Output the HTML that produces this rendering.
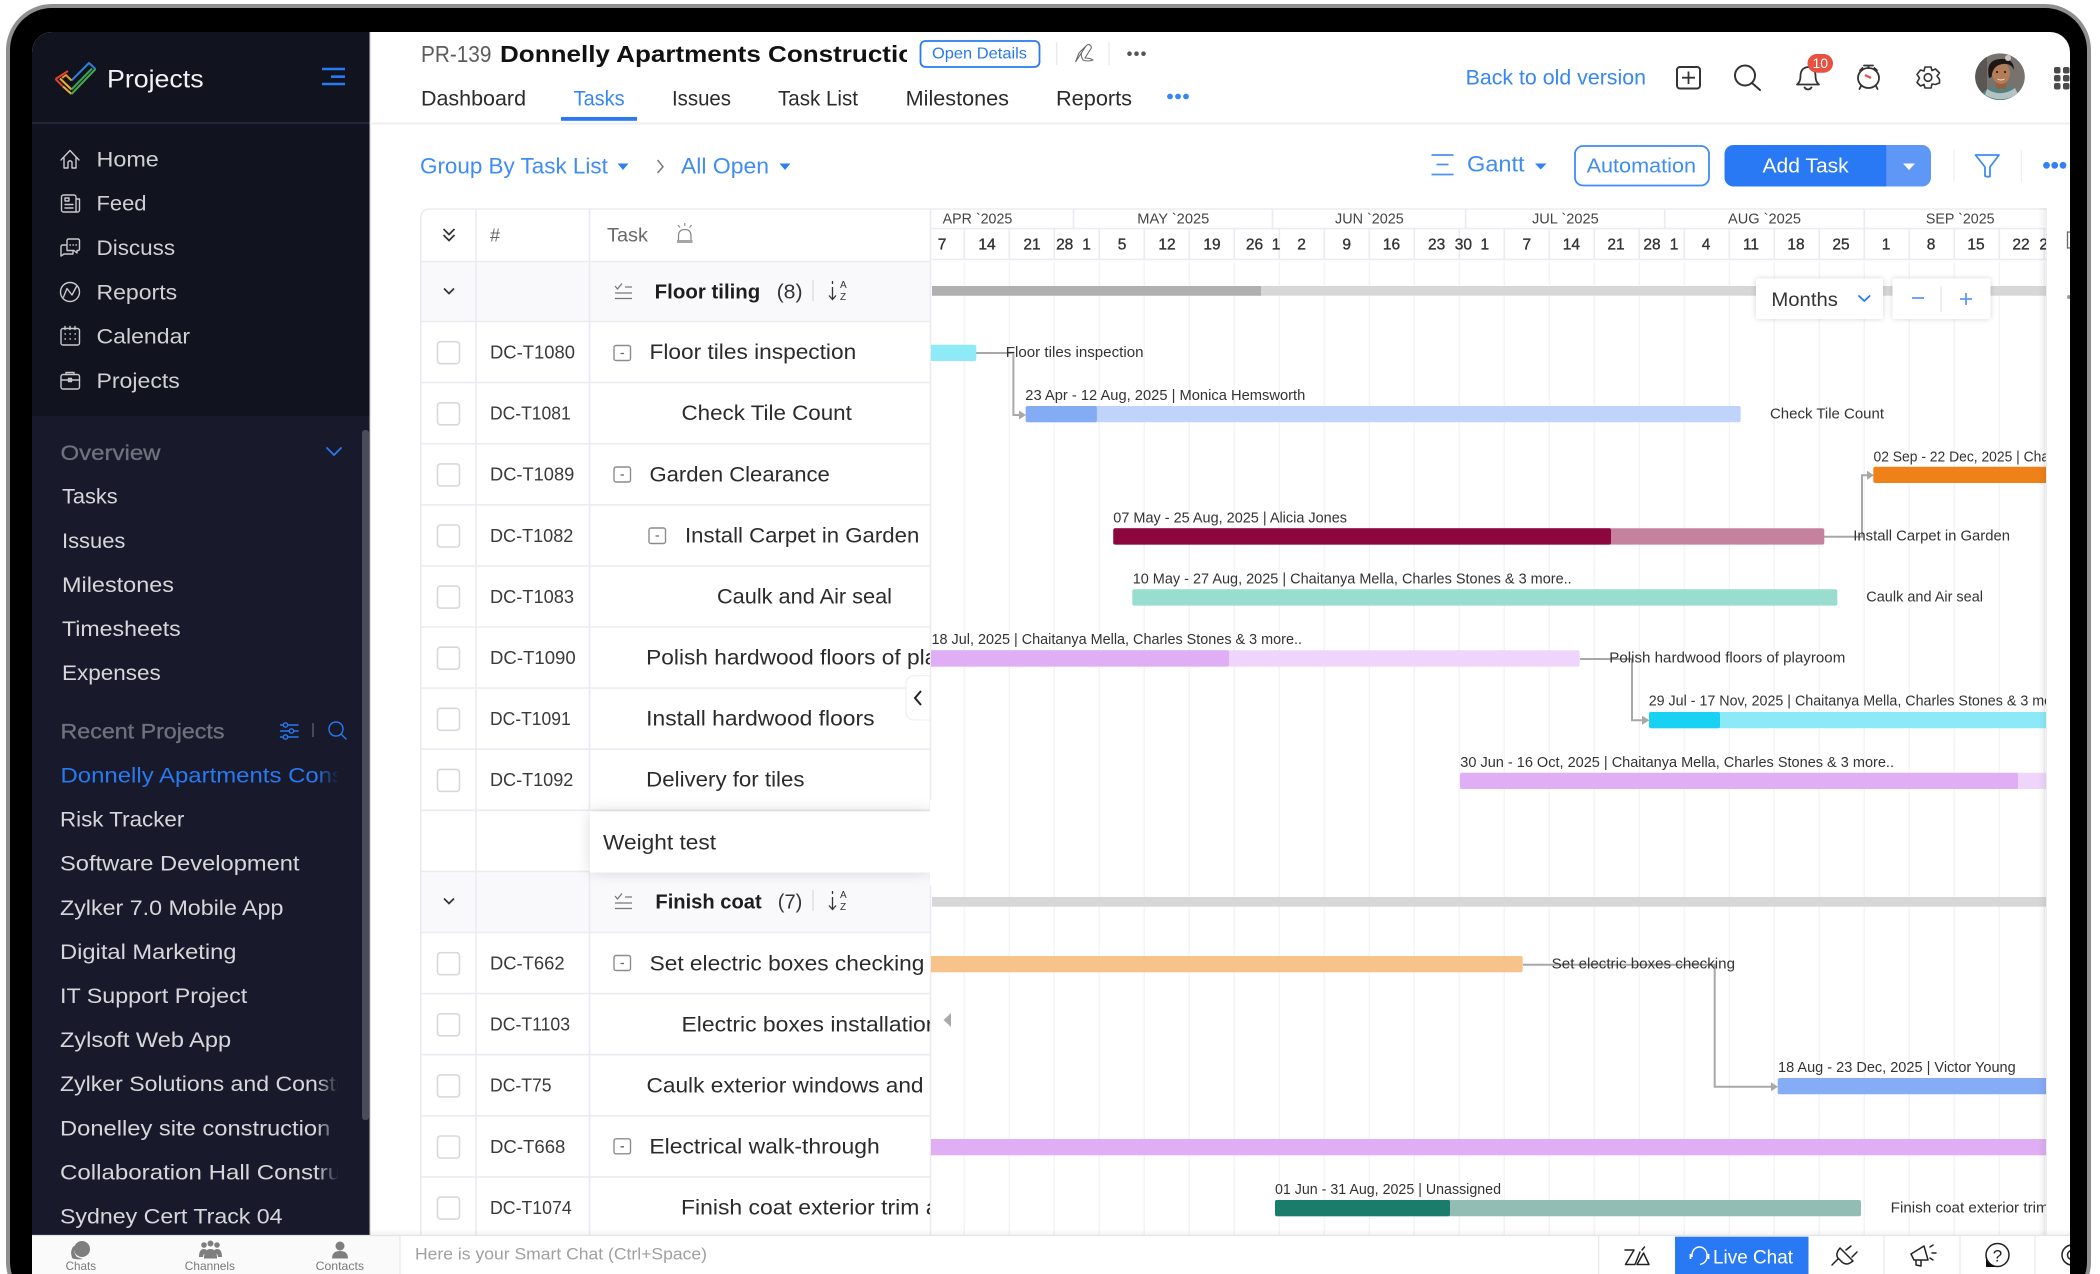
<!DOCTYPE html>
<html lang="en"><head><meta charset="utf-8"><title>Projects</title>
<style>
html,body{margin:0;padding:0;background:#fff;width:2100px;height:1274px;overflow:hidden}
svg{display:block}
text{font-family:"Liberation Sans",Arial,sans-serif;white-space:pre}
.nav{font-size:21px;fill:#cfd0d4}
.sub{font-size:21px;fill:#d6d7da}
.id{font-size:18px;fill:#3a3a3a}
.tn{font-size:21px;fill:#2b2b2b}
.g{font-size:14.5px;fill:#333}
.d{font-size:15.5px;fill:#333;stroke:#333;stroke-width:.35;text-anchor:middle}
.m{font-size:14.5px;fill:#444}
.tab{font-size:21px;fill:#2b2b2b}
.ic{fill:none;stroke:#c8c9cd;stroke-width:1.4;stroke-linecap:round;stroke-linejoin:round}
.dk{fill:none;stroke:#333;stroke-width:1.8;stroke-linecap:round;stroke-linejoin:round}
.cb{fill:#fff;stroke:#d8d8dc;stroke-width:1.6}
.mb{fill:#fff;stroke:#8c8c8c;stroke-width:1.4}
.bl{fill:none;stroke:#2979f0;stroke-width:1.8;stroke-linecap:round;stroke-linejoin:round}
.con{fill:none;stroke:#a8a8a8;stroke-width:2}
</style></head><body>
<svg xmlns="http://www.w3.org/2000/svg" width="2100" height="1274" viewBox="0 0 2100 1274">
<defs>
<clipPath id="scr"><path d="M52 32H2050a20 20 0 0 1 20 20V1274H32V52a20 20 0 0 1 20-20z"/></clipPath>
<clipPath id="gc"><rect x="931" y="262" width="1115" height="973"/></clipPath>
<clipPath id="tc"><rect x="590" y="262" width="340" height="973"/></clipPath>
<clipPath id="hc"><rect x="931" y="208" width="1115" height="52"/></clipPath>
<clipPath id="ttl"><rect x="495" y="30" width="412" height="50"/></clipPath>
<clipPath id="sb"><rect x="40" y="760" width="298" height="475"/></clipPath>
<clipPath id="av"><ellipse cx="2000" cy="76.7" rx="24.8" ry="23.3"/></clipPath>
<linearGradient id="fade" x1="0" x2="1" y1="0" y2="0"><stop offset="0" stop-color="#181a2b" stop-opacity="0"/><stop offset="1" stop-color="#181a2b"/></linearGradient>
<linearGradient id="sh" x1="0" x2="1" y1="0" y2="0"><stop offset="0" stop-color="#000" stop-opacity="0"/><stop offset="1" stop-color="#000" stop-opacity=".06"/></linearGradient>
<linearGradient id="shb" x1="0" x2="0" y1="0" y2="1"><stop offset="0" stop-color="#000" stop-opacity="0"/><stop offset="1" stop-color="#000" stop-opacity=".05"/></linearGradient>
</defs>

<!-- device frame -->
<rect x="8" y="6" width="2081" height="1300" rx="44" fill="#000" stroke="#8f8f8f" stroke-width="4"/>

<g clip-path="url(#scr)">
<rect x="32" y="32" width="2038" height="1242" fill="#fff"/>

<!-- SIDEBAR -->
<rect x="32" y="32" width="337.500" height="384" fill="#11141f"/>
<rect x="32" y="416" width="337.500" height="820" fill="#181a2b"/>
<rect x="32" y="122" width="337.500" height="2" fill="#23273a"/>
<rect x="369.500" y="32" width="1" height="1204" fill="#c9cbd2"/>
<rect x="362" y="430" width="7" height="690" rx="3" fill="#4a4c5b"/>

<!-- logo -->
<g fill="none" stroke-width="2" stroke-linejoin="round">
<path d="M68 71L55.500 79" stroke="#e2402f"/><path d="M55.500 79L63 86.500" stroke="#d9432d"/>
<path d="M63 86.500L71.500 94" stroke="#efb02a"/><path d="M71.500 94L95.500 69" stroke="#48a84e"/>
<path d="M95.500 69L89 63L71.500 80.500" stroke="#2f7fd8"/>
<path d="M62 78L66 75L71.500 80.500" stroke="#e8972a"/>
<path d="M60 78.500L71.500 89.500" stroke="#efb02a"/><path d="M71.500 89.500L92 68.500" stroke="#3f9f56"/>
</g>
<text x="107" y="87.700" font-size="25" fill="#f2f2f4" textLength="96.600" lengthAdjust="spacingAndGlyphs">Projects</text>
<path d="M322 69H345M331 76.700H345M322 84H345" stroke="#2979f5" stroke-width="2.600" fill="none"/>

<!-- nav icons -->
<g class="ic">
<path d="M61 160L70 150.500L79 160M64 158V168H68V162Q70 159.500 72 162V168H76V158"/>
<path d="M61.500 197a2 2 0 0 1 2-2H74a2 2 0 0 1 2 2V212H63.500a2 2 0 0 1-2-2zM76 199H79.500V210a2 2 0 0 1-2 2H76"/><rect x="65" y="198" width="4" height="3"/><path d="M65 204.500H73M65 208H73"/>
<path d="M67 240.500a1.500 1.500 0 0 1 1.500-1.500H78a1.500 1.500 0 0 1 1.500 1.500V249a1.500 1.500 0 0 1-1.500 1.500H77V253L74 250.500H67zM66 245H62.500a1.500 1.500 0 0 0-1.500 1.500V254V256L64 254H73V251"/><path d="M70 245H70.400M73 245H73.400M76 245H76.400"/>
<circle cx="70" cy="292" r="9.500"/><path d="M63.500 297L67 288.500L72 295L76.500 286.500"/>
<rect x="61" y="328.500" width="18.500" height="16.500" rx="2"/><path d="M65 326.500V329.500M70 326.500V329.500M75 326.500V329.500M65 334H65.400M70 334H70.400M75 334H75.400M65 339H65.400M70 339H70.400M75 339H75.400"/>
<rect x="61" y="374.500" width="18.500" height="14.500" rx="2"/><path d="M66 374.500V372.500H74V374.500M61 380H79.500"/><rect x="68.500" y="378.500" width="3" height="3"/>
</g>
<text class="nav" x="96.500" y="166.700" textLength="62.300" lengthAdjust="spacingAndGlyphs">Home</text>
<text class="nav" x="96.500" y="210.700" textLength="50" lengthAdjust="spacingAndGlyphs">Feed</text>
<text class="nav" x="96.500" y="255" textLength="78.600" lengthAdjust="spacingAndGlyphs">Discuss</text>
<text class="nav" x="96.500" y="299.300" textLength="80.600" lengthAdjust="spacingAndGlyphs">Reports</text>
<text class="nav" x="96.500" y="343.300" textLength="93.600" lengthAdjust="spacingAndGlyphs">Calendar</text>
<text class="nav" x="96.500" y="388" textLength="83.300" lengthAdjust="spacingAndGlyphs">Projects</text>

<text x="60.500" y="460" font-size="21" fill="#6f717c" stroke="#6f717c" stroke-width=".3" textLength="100" lengthAdjust="spacingAndGlyphs">Overview</text>
<path d="M327 448L334 455L341 448" class="bl"/>
<text class="sub" x="62" y="503.300" textLength="55.700" lengthAdjust="spacingAndGlyphs">Tasks</text>
<text class="sub" x="62" y="548" textLength="63.400" lengthAdjust="spacingAndGlyphs">Issues</text>
<text class="sub" x="62" y="592" textLength="112" lengthAdjust="spacingAndGlyphs">Milestones</text>
<text class="sub" x="62" y="636" textLength="118.700" lengthAdjust="spacingAndGlyphs">Timesheets</text>
<text class="sub" x="62" y="680" textLength="98.700" lengthAdjust="spacingAndGlyphs">Expenses</text>

<text x="60.500" y="738.300" font-size="21" fill="#6f717c" stroke="#6f717c" stroke-width=".3" textLength="164" lengthAdjust="spacingAndGlyphs">Recent Projects</text>
<g class="bl" style="stroke-width:1.400">
<path d="M280.500 725H283M288 725H298M280.500 731H289M294 731H298M280.500 737H283M288 737H298"/>
<circle cx="285.500" cy="725" r="2.200"/><circle cx="291.500" cy="731" r="2.200"/><circle cx="285.500" cy="737" r="2.200"/>
<circle cx="336" cy="729" r="7"/><path d="M341 734L346 739"/>
</g>
<path d="M313 723V737" stroke="#555868" stroke-width="1.500"/>

<g clip-path="url(#sb)">
<g class="sub">
<text x="60.500" y="782.500" style="fill:#2979f0" textLength="362" lengthAdjust="spacingAndGlyphs">Donnelly Apartments Construction</text>
<text x="60" y="826.600" textLength="124.300" lengthAdjust="spacingAndGlyphs">Risk Tracker</text>
<text x="60" y="870.700" textLength="239.500" lengthAdjust="spacingAndGlyphs">Software Development</text>
<text x="60" y="914.800" textLength="223.400" lengthAdjust="spacingAndGlyphs">Zylker 7.0 Mobile App</text>
<text x="60" y="958.900" textLength="176.500" lengthAdjust="spacingAndGlyphs">Digital Marketing</text>
<text x="60" y="1003" textLength="187.200" lengthAdjust="spacingAndGlyphs">IT Support Project</text>
<text x="60" y="1047.100" textLength="171.100" lengthAdjust="spacingAndGlyphs">Zylsoft Web App</text>
<text x="60" y="1091.200" textLength="345" lengthAdjust="spacingAndGlyphs">Zylker Solutions and Construction</text>
<text x="60" y="1135.300" textLength="270.300" lengthAdjust="spacingAndGlyphs">Donelley site construction</text>
<text x="60" y="1179.400" textLength="332" lengthAdjust="spacingAndGlyphs">Collaboration Hall Construction</text>
<text x="60" y="1223.500" textLength="222.500" lengthAdjust="spacingAndGlyphs">Sydney Cert Track 04</text>
</g>
</g>
<rect x="316" y="760" width="23" height="440" fill="url(#fade)"/>

<!-- TOP HEADER -->
<text x="421" y="62" font-size="23" fill="#5c5c5c" textLength="70.400" lengthAdjust="spacingAndGlyphs">PR-139</text>
<g clip-path="url(#ttl)"><text x="500" y="62" font-size="23" font-weight="700" fill="#111" textLength="430" lengthAdjust="spacingAndGlyphs">Donnelly Apartments Construction</text></g>
<rect x="920.500" y="41" width="119" height="26" rx="5" fill="#fff" stroke="#2979f0" stroke-width="1.800"/>
<text x="932" y="58.700" font-size="16" fill="#2979f0" textLength="95" lengthAdjust="spacingAndGlyphs">Open Details</text>
<path d="M1056.700 42V65M1109 42V65" stroke="#e8e8ea" stroke-width="1.200"/>
<path d="M1075.500 62L1086 46Q1088 43.500 1090 45L1091 46Q1092 48 1090 50L1085 58Q1090 58 1093 60Q1088 62 1083 60Q1080 55 1082 52M1075.500 62L1079 53L1086 46" fill="none" stroke="#6a6a6a" stroke-width="1.100" stroke-linejoin="round"/>
<g fill="#555"><circle cx="1129.500" cy="53.700" r="2.300"/><circle cx="1136.500" cy="53.700" r="2.300"/><circle cx="1143.500" cy="53.700" r="2.300"/></g>

<text class="tab" x="421" y="105.300" textLength="105" lengthAdjust="spacingAndGlyphs">Dashboard</text>
<text class="tab" x="573.600" y="105.300" style="fill:#3686f3" textLength="51" lengthAdjust="spacingAndGlyphs">Tasks</text>
<text class="tab" x="672" y="105.300" textLength="59" lengthAdjust="spacingAndGlyphs">Issues</text>
<text class="tab" x="778" y="105.300" textLength="80" lengthAdjust="spacingAndGlyphs">Task List</text>
<text class="tab" x="905.700" y="105.300" textLength="103.300" lengthAdjust="spacingAndGlyphs">Milestones</text>
<text class="tab" x="1056" y="105.300" textLength="76" lengthAdjust="spacingAndGlyphs">Reports</text>
<g fill="#3686f3"><circle cx="1170" cy="96.500" r="2.900"/><circle cx="1178" cy="96.500" r="2.900"/><circle cx="1186" cy="96.500" r="2.900"/></g>
<rect x="561" y="117" width="76" height="3.800" fill="#2979f0"/>
<rect x="370" y="122.500" width="1700" height="2" fill="#eeeef0"/>

<text x="1465.600" y="84.700" font-size="21" fill="#3686f3" textLength="180.400" lengthAdjust="spacingAndGlyphs">Back to old version</text>
<rect x="1677" y="67" width="23" height="21.500" rx="3" fill="none" stroke="#333" stroke-width="2"/><path d="M1688.500 71.500V84M1682 77.700H1695" stroke="#333" stroke-width="1.800"/>
<g class="dk" style="stroke-width:2"><circle cx="1745" cy="75.500" r="10"/><path d="M1752 83L1760 90"/></g>
<g class="dk"><path d="M1797 84.500Q1800.500 82 1800.500 76Q1800.500 68 1808 67Q1815.500 68 1815.500 76Q1815.500 82 1819 84.500zM1804.500 87.500Q1808 91.500 1811.500 87.500"/></g>
<rect x="1807.500" y="54" width="25.500" height="18.700" rx="9.300" fill="#e8503f"/>
<text x="1820.300" y="68" font-size="14" fill="#fff" text-anchor="middle">10</text>
<g class="dk"><ellipse cx="1868.500" cy="78" rx="10.500" ry="10"/><path d="M1864 65.500H1873M1868.500 65.500V68M1860 70.500L1862.500 68M1877 70.500L1874.500 68M1861 86L1859.500 89M1876 86L1877.500 89"/></g><path d="M1865 75L1871 78" stroke="#e8503f" stroke-width="2.200"/>
<g class="dk" style="stroke-width:1.600"><path d="M1925 67H1931L1932 70.500L1935.500 69L1939.500 73L1937 76L1939.500 79.500L1939.500 83L1935.500 84.500L1932 84L1931 88H1925L1924 84.500L1920.500 86L1917 82.500L1919.500 78L1917 74.500L1920.500 70L1924 71z"/><circle cx="1928" cy="77.500" r="3.800"/></g>

<!-- avatar -->
<g clip-path="url(#av)">
<rect x="1970" y="50" width="60" height="55" fill="#77726e"/>
<rect x="1975" y="50" width="12" height="55" fill="#5a5654"/>
<path d="M1978 102Q1982 86 2001 86Q2020 86 2024 102z" fill="#54807f"/>
<path d="M1987 89Q2001 98 2015 88L2018 94Q2001 104 1985 95z" fill="#b4c2c2"/>
<rect x="1996" y="80" width="10" height="9" fill="#95603f"/>
<ellipse cx="2001" cy="73" rx="9" ry="11" fill="#b47d58"/>
<path d="M1989 78Q1985 60 2000 59Q2014 58 2014 70Q2011 63 2003 64Q1994 65 1992 74Q1992 78 1989 78z" fill="#1d1817"/>
<circle cx="2008" cy="58" r="3" fill="#cfc7bf"/>
<circle cx="1997" cy="72" r="1.100" fill="#222"/><circle cx="2005" cy="72" r="1.100" fill="#222"/>
<path d="M1997.500 79Q2001 81 2004.500 79" stroke="#f0e8e0" stroke-width="1" fill="none"/>
</g>
<g fill="#4a4a4a">
<rect x="2054" y="67" width="6.500" height="6.500" rx="2"/><rect x="2063" y="67" width="6.500" height="6.500" rx="2"/>
<rect x="2054" y="75" width="6.500" height="6.500" rx="2"/><rect x="2063" y="75" width="6.500" height="6.500" rx="2"/>
<rect x="2054" y="83" width="6.500" height="6.500" rx="2"/><rect x="2063" y="83" width="6.500" height="6.500" rx="2"/>
</g>

<!-- TOOLBAR -->
<text x="420" y="173.300" font-size="22.500" fill="#3f8cf5" textLength="187.800" lengthAdjust="spacingAndGlyphs">Group By Task List</text>
<path d="M617.500 163.500H628.500L623 170z" fill="#2f80f3"/>
<path d="M657.500 160L663 166.700L657.500 173" fill="none" stroke="#777" stroke-width="1.500"/>
<text x="681" y="173.300" font-size="22.500" fill="#3f8cf5" textLength="88" lengthAdjust="spacingAndGlyphs">All Open</text>
<path d="M779.500 163.500H790.500L785 170z" fill="#2f80f3"/>

<path d="M1431.500 155H1453.500M1436.500 164.500H1448.500M1431.500 174.500H1453.500" stroke="#4d91f3" stroke-width="1.700" fill="none"/>
<text x="1467" y="171.700" font-size="22" fill="#3f8cf5" textLength="57.600" lengthAdjust="spacingAndGlyphs">Gantt</text>
<path d="M1535 163.500H1546.500L1540.700 169.500z" fill="#2f80f3"/>
<rect x="1575" y="146" width="134" height="39.500" rx="8" fill="#fff" stroke="#3f8cf5" stroke-width="1.800"/>
<text x="1586.600" y="172.300" font-size="20" fill="#3f8cf5" textLength="109.400" lengthAdjust="spacingAndGlyphs">Automation</text>
<path d="M1733.500 145H1886.600V186.500H1733.500a9 9 0 0 1-9-9V154a9 9 0 0 1 9-9z" fill="#2979f5"/>
<path d="M1886.600 145H1922a9 9 0 0 1 9 9V177.500a9 9 0 0 1-9 9H1886.600z" fill="#5f97f6"/>
<text x="1762.500" y="172.300" font-size="20.500" fill="#fff" textLength="86.200" lengthAdjust="spacingAndGlyphs">Add Task</text>
<path d="M1903 163.500H1915L1909 170z" fill="#fff"/>
<path d="M1954 150V182M2021.400 150V182" stroke="#efeff1" stroke-width="1.200"/>
<path d="M1975.500 155H1999L1990 167V176.500Q1986.500 177 1985 176V167z" fill="none" stroke="#3f8cf5" stroke-width="1.800" stroke-linejoin="round"/>
<g fill="#3581f3"><circle cx="2046.500" cy="165.300" r="3.400"/><circle cx="2054.700" cy="165.300" r="3.400"/><circle cx="2063" cy="165.300" r="3.400"/></g>

<!-- TABLE -->
<rect x="420.500" y="209" width="510" height="1040" fill="#fff"/>
<rect x="421" y="262" width="509" height="60" fill="#f9f9fb"/>
<rect x="421" y="872" width="509" height="61" fill="#f9f9fb"/>
<g stroke="#ebebf2" stroke-width="1.600" fill="none">
<path d="M420.800 1236V217a8 8 0 0 1 8-8H2046"/>
<path d="M476 209V1236M589.500 209V810M589.500 872V1236M930.500 209V1236"/>
<path d="M421 261.500H930M421 321.500H930M421 382.600H930M421 443.700H930M421 504.800H930M421 565.900H930M421 627H930M421 688.100H930M421 749.200H930M421 810.300H930M421 871.400H930M421 932.500H930M421 993.600H930M421 1054.700H930M421 1115.800H930M421 1176.900H930"/>
</g>
<text x="490" y="241.700" font-size="18" fill="#666">#</text>
<text x="607" y="241.700" font-size="19" fill="#6a6a6a" textLength="41" lengthAdjust="spacingAndGlyphs">Task</text>
<path d="M678.500 241V236Q678.500 229.500 684.800 229.500Q691 229.500 691 236V241" fill="none" stroke="#8a8a8a" stroke-width="1.300"/>
<rect x="677" y="240" width="15.500" height="3" fill="#a5a5a5"/>
<path d="M684.800 223V226M678 225L680 227.500M691.500 225L689.500 227.500" fill="none" stroke="#8a8a8a" stroke-width="1.200"/>
<path d="M443.500 229L449 234.500L454.500 229M443.500 235L449 240.500L454.500 235" fill="none" stroke="#333" stroke-width="1.700"/>
<path d="M444 288.500L449 293.500L454 288.500" fill="none" stroke="#333" stroke-width="1.700"/>
<path d="M444 898.500L449 903.500L454 898.500" fill="none" stroke="#333" stroke-width="1.700"/>

<!-- group rows -->
<g fill="none" stroke="#777" stroke-width="1.300">
<path d="M615 286L617.500 289L622 283.500M625 287H632M615 293H632M615 298.500H632"/>
<path d="M615 896L617.500 899L622 893.500M625 897H632M615 903H632M615 908.500H632"/>
</g>
<text x="654.700" y="298.300" font-size="20" font-weight="700" fill="#1d1d1d" textLength="105.600" lengthAdjust="spacingAndGlyphs">Floor tiling</text>
<text x="776.600" y="298.300" font-size="20" fill="#333" textLength="26" lengthAdjust="spacingAndGlyphs">(8)</text>
<path d="M813 280V301M813 890V911" stroke="#d8d8dc" stroke-width="1.200"/>
<path d="M832.500 281V284M832.500 287V299M829 295.500L832.500 299.500L836 295.500" fill="none" stroke="#333" stroke-width="1.300"/>
<text x="840" y="288" font-size="10" fill="#333">A</text><text x="840" y="300" font-size="10" fill="#333">Z</text>
<text x="655.400" y="908.300" font-size="20" font-weight="700" fill="#1d1d1d" textLength="106.300" lengthAdjust="spacingAndGlyphs">Finish coat</text>
<text x="777.800" y="908.300" font-size="20" fill="#333" textLength="24.500" lengthAdjust="spacingAndGlyphs">(7)</text>
<path d="M832.500 891V894M832.500 897V909M829 905.500L832.500 909.500L836 905.500" fill="none" stroke="#333" stroke-width="1.300"/>
<text x="840" y="898" font-size="10" fill="#333">A</text><text x="840" y="910" font-size="10" fill="#333">Z</text>

<!-- checkboxes -->
<g class="cb">
<rect x="437.500" y="341.700" width="22" height="22" rx="3"/><rect x="437.500" y="402.800" width="22" height="22" rx="3"/>
<rect x="437.500" y="463.900" width="22" height="22" rx="3"/><rect x="437.500" y="525" width="22" height="22" rx="3"/>
<rect x="437.500" y="586.100" width="22" height="22" rx="3"/><rect x="437.500" y="647.200" width="22" height="22" rx="3"/>
<rect x="437.500" y="708.300" width="22" height="22" rx="3"/><rect x="437.500" y="769.400" width="22" height="22" rx="3"/>
<rect x="437.500" y="952.700" width="22" height="22" rx="3"/><rect x="437.500" y="1013.800" width="22" height="22" rx="3"/>
<rect x="437.500" y="1074.900" width="22" height="22" rx="3"/><rect x="437.500" y="1136" width="22" height="22" rx="3"/>
<rect x="437.500" y="1197.100" width="22" height="22" rx="3"/>
</g>
<!-- IDs -->
<g class="id">
<text x="490" y="358.500" textLength="85" lengthAdjust="spacingAndGlyphs">DC-T1080</text>
<text x="490" y="419.600" textLength="80.700" lengthAdjust="spacingAndGlyphs">DC-T1081</text>
<text x="490" y="480.700" textLength="84.300" lengthAdjust="spacingAndGlyphs">DC-T1089</text>
<text x="490" y="541.800" textLength="83.300" lengthAdjust="spacingAndGlyphs">DC-T1082</text>
<text x="490" y="602.900" textLength="84" lengthAdjust="spacingAndGlyphs">DC-T1083</text>
<text x="490" y="664" textLength="85.700" lengthAdjust="spacingAndGlyphs">DC-T1090</text>
<text x="490" y="725.100" textLength="80.700" lengthAdjust="spacingAndGlyphs">DC-T1091</text>
<text x="490" y="786.200" textLength="83.300" lengthAdjust="spacingAndGlyphs">DC-T1092</text>
<text x="490" y="969.500" textLength="74.600" lengthAdjust="spacingAndGlyphs">DC-T662</text>
<text x="490" y="1030.600" textLength="80" lengthAdjust="spacingAndGlyphs">DC-T1103</text>
<text x="490" y="1091.700" textLength="61.600" lengthAdjust="spacingAndGlyphs">DC-T75</text>
<text x="490" y="1152.800" textLength="75.400" lengthAdjust="spacingAndGlyphs">DC-T668</text>
<text x="490" y="1213.900" textLength="81.700" lengthAdjust="spacingAndGlyphs">DC-T1074</text>
</g>
<!-- minus boxes -->
<g class="mb">
<rect x="614" y="345.500" width="16.500" height="15" rx="2"/><rect x="614" y="467" width="16.500" height="15" rx="2"/>
<rect x="649" y="528" width="16.500" height="15.500" rx="2"/><rect x="614" y="955.500" width="16.500" height="15" rx="2"/>
<rect x="614" y="1138.800" width="16.500" height="15" rx="2"/>
</g>
<path d="M620.500 353.500H624M620.500 475H624M655.500 536H659M620.500 963.500H624M620.500 1146.800H624" stroke="#666" stroke-width="1.300"/>

<!-- task names -->
<g clip-path="url(#tc)" class="tn">
<text x="649.500" y="359" textLength="206.700" lengthAdjust="spacingAndGlyphs">Floor tiles inspection</text>
<text x="681.500" y="420.100" textLength="170.300" lengthAdjust="spacingAndGlyphs">Check Tile Count</text>
<text x="649.500" y="481.500" textLength="180.300" lengthAdjust="spacingAndGlyphs">Garden Clearance</text>
<text x="685" y="542.300" textLength="234.300" lengthAdjust="spacingAndGlyphs">Install Carpet in Garden</text>
<text x="717" y="603.400" textLength="175" lengthAdjust="spacingAndGlyphs">Caulk and Air seal</text>
<text x="646.200" y="664.500" textLength="354" lengthAdjust="spacingAndGlyphs">Polish hardwood floors of playroom</text>
<text x="646.200" y="725.600" textLength="228.300" lengthAdjust="spacingAndGlyphs">Install hardwood floors</text>
<text x="646.200" y="786.700" textLength="158.300" lengthAdjust="spacingAndGlyphs">Delivery for tiles</text>
<text x="649.600" y="970.300" textLength="274.800" lengthAdjust="spacingAndGlyphs">Set electric boxes checking</text>
<text x="681.500" y="1031.500" textLength="257" lengthAdjust="spacingAndGlyphs">Electric boxes installation</text>
<text x="646.500" y="1092.500" textLength="340" lengthAdjust="spacingAndGlyphs">Caulk exterior windows and doors</text>
<text x="649.400" y="1153.600" textLength="230.300" lengthAdjust="spacingAndGlyphs">Electrical walk-through</text>
<text x="681" y="1214.400" textLength="283" lengthAdjust="spacingAndGlyphs">Finish coat exterior trim and</text>
</g>

<!-- weight test -->
<rect x="590" y="811.500" width="340" height="61" fill="#fff" style="filter:drop-shadow(0 0 7px rgba(0,0,0,.14))"/>
<rect x="930" y="800" width="20" height="85" fill="#fff"/>
<text x="603" y="849.300" font-size="21" fill="#2b2b2b" textLength="113" lengthAdjust="spacingAndGlyphs">Weight test</text>

<!-- GANTT HEADER -->
<g stroke="#ebebf2" stroke-width="1.600" fill="none">
<path d="M931 228.500H2046M931 259.500H2046"/>
<path d="M1073.500 209V228M1272.500 209V228M1465.600 209V228M1664.700 209V228M1864.300 209V228"/>
<path d="M964.300 229V259M1009.300 229V259M1054.300 229V259M1099.300 229V259M1144.300 229V259M1189.300 229V259M1234.300 229V259M1279.300 229V259M1324.300 229V259M1369.300 229V259M1414.300 229V259M1459.300 229V259M1504.300 229V259M1549.300 229V259M1594.300 229V259M1639.300 229V259M1684.300 229V259M1729.300 229V259M1774.300 229V259M1819.300 229V259M1864.300 229V259M1909.300 229V259M1954.300 229V259M1999.300 229V259M2044.300 229V259"/>
</g>
<g class="m">
<text x="942.600" y="223.300" textLength="69.700" lengthAdjust="spacingAndGlyphs">APR `2025</text>
<text x="1137.300" y="223.300" textLength="72" lengthAdjust="spacingAndGlyphs">MAY `2025</text>
<text x="1335" y="223.300" textLength="68.800" lengthAdjust="spacingAndGlyphs">JUN `2025</text>
<text x="1532" y="223.300" textLength="66.700" lengthAdjust="spacingAndGlyphs">JUL `2025</text>
<text x="1728" y="223.300" textLength="73" lengthAdjust="spacingAndGlyphs">AUG `2025</text>
<text x="1925.900" y="223.300" textLength="68.700" lengthAdjust="spacingAndGlyphs">SEP `2025</text>
</g>
<g clip-path="url(#hc)" class="d">
<text x="942" y="249.300">7</text><text x="987" y="249.300">14</text><text x="1032" y="249.300">21</text><text x="1064.700" y="249.300">28</text><text x="1086.500" y="249.300">1</text>
<text x="1122" y="249.300">5</text><text x="1167" y="249.300">12</text><text x="1212" y="249.300">19</text><text x="1254.500" y="249.300">26</text><text x="1276" y="249.300">1</text>
<text x="1301.500" y="249.300">2</text><text x="1346.700" y="249.300">9</text><text x="1391.500" y="249.300">16</text><text x="1436.600" y="249.300">23</text><text x="1463.400" y="249.300">30</text><text x="1484.800" y="249.300">1</text>
<text x="1526.800" y="249.300">7</text><text x="1571.400" y="249.300">14</text><text x="1616" y="249.300">21</text><text x="1652" y="249.300">28</text><text x="1674" y="249.300">1</text>
<text x="1706" y="249.300">4</text><text x="1751" y="249.300">11</text><text x="1796" y="249.300">18</text><text x="1841" y="249.300">25</text>
<text x="1886" y="249.300">1</text><text x="1931" y="249.300">8</text><text x="1976" y="249.300">15</text><text x="2021" y="249.300">22</text><text x="2048" y="249.300">29</text>
</g>

<!-- GANTT BODY -->
<g clip-path="url(#gc)">
<path d="M964.300 260V1235M1009.300 260V1235M1054.300 260V1235M1099.300 260V1235M1144.300 260V1235M1189.300 260V1235M1234.300 260V1235M1279.300 260V1235M1324.300 260V1235M1369.300 260V1235M1414.300 260V1235M1459.300 260V1235M1504.300 260V1235M1549.300 260V1235M1594.300 260V1235M1639.300 260V1235M1684.300 260V1235M1729.300 260V1235M1774.300 260V1235M1819.300 260V1235M1864.300 260V1235M1909.300 260V1235M1954.300 260V1235M1999.300 260V1235M2044.300 260V1235" stroke="#f3f3f6" stroke-width="1.300" fill="none"/>

<rect x="932" y="286" width="1114" height="9.700" fill="#d7d7d7"/><rect x="932" y="286" width="329" height="9.700" fill="#b0b0b0"/>
<rect x="932" y="897" width="1114" height="9.700" fill="#d7d7d7"/>

<!-- connectors -->
<path class="con" d="M976 353H1013.400V415H1020"/><path d="M1019 410.500L1026 415L1019 419.500z" fill="#a8a8a8"/>
<path class="con" d="M1824 536.700H1862V475.300H1868"/><path d="M1867 470.800L1874 475.300L1867 479.800z" fill="#a8a8a8"/>
<path class="con" d="M1580 659H1632V720.300H1643"/><path d="M1642 715.800L1649.500 720.300L1642 724.800z" fill="#a8a8a8"/>
<path class="con" d="M1523 964.700H1714.700V1086.700H1772"/><path d="M1771 1082.200L1778 1086.700L1771 1091.200z" fill="#a8a8a8"/>

<!-- bars -->
<rect x="920" y="344.700" width="56.300" height="16.300" rx="2" fill="#8eeaf7"/>
<rect x="1025.700" y="406" width="715" height="16.300" rx="2" fill="#c0d4fb"/><rect x="1025.700" y="406" width="71.200" height="16.300" rx="2" fill="#83acf5"/>
<rect x="1873.300" y="466.700" width="200" height="16.300" rx="2" fill="#ee8219"/>
<rect x="1113.300" y="528.300" width="711" height="16.300" rx="2" fill="#c5829f"/><rect x="1113.300" y="528.300" width="497.700" height="16.300" rx="2" fill="#8b073d"/>
<rect x="1132.300" y="589.300" width="705" height="16.300" rx="2" fill="#98ddce"/>
<rect x="920" y="650.300" width="659.700" height="16.300" rx="2" fill="#efd5fb"/><rect x="920" y="650.300" width="309" height="16.300" rx="2" fill="#dfaef5"/>
<rect x="1649" y="712" width="420" height="16.300" rx="2" fill="#8ceaf8"/><rect x="1649" y="712" width="71" height="16.300" rx="2" fill="#19d1f2"/>
<rect x="1460" y="772.700" width="620" height="16.300" rx="2" fill="#efd5fb"/><rect x="1460" y="772.700" width="558" height="16.300" rx="2" fill="#dfaef5"/>
<rect x="920" y="956" width="602.700" height="16.300" rx="2" fill="#f8c38a"/>
<rect x="1777.700" y="1078" width="300" height="16.300" rx="2" fill="#85acf5"/>
<rect x="920" y="1139" width="1140" height="16.300" fill="#dfaef5"/>
<rect x="1275" y="1200" width="586" height="16.300" rx="2" fill="#92bdb5"/><rect x="1275" y="1200" width="175" height="16.300" rx="2" fill="#1a7d6c"/>

<!-- labels -->
<g class="g">
<text x="1005.800" y="356.900" textLength="137.700" lengthAdjust="spacingAndGlyphs">Floor tiles inspection</text>
<text x="1025.300" y="400" textLength="280" lengthAdjust="spacingAndGlyphs">23 Apr - 12 Aug, 2025 | Monica Hemsworth</text>
<text x="1770" y="418.300" textLength="114" lengthAdjust="spacingAndGlyphs">Check Tile Count</text>
<text x="1873.500" y="461.300" textLength="245" lengthAdjust="spacingAndGlyphs">02 Sep - 22 Dec, 2025 | Charles Stones</text>
<text x="1113.300" y="522.300" textLength="233.700" lengthAdjust="spacingAndGlyphs">07 May - 25 Aug, 2025 | Alicia Jones</text>
<text x="1853.300" y="540.700" textLength="156.700" lengthAdjust="spacingAndGlyphs">Install Carpet in Garden</text>
<text x="1132.700" y="583.300" textLength="439" lengthAdjust="spacingAndGlyphs">10 May - 27 Aug, 2025 | Chaitanya Mella, Charles Stones &amp; 3 more..</text>
<text x="1866.300" y="601.300" textLength="116.700" lengthAdjust="spacingAndGlyphs">Caulk and Air seal</text>
<text x="931.500" y="644" textLength="370.500" lengthAdjust="spacingAndGlyphs">18 Jul, 2025 | Chaitanya Mella, Charles Stones &amp; 3 more..</text>
<text x="1609.300" y="662.700" textLength="236" lengthAdjust="spacingAndGlyphs">Polish hardwood floors of playroom</text>
<text x="1648.700" y="705.300" textLength="424" lengthAdjust="spacingAndGlyphs">29 Jul - 17 Nov, 2025 | Chaitanya Mella, Charles Stones &amp; 3 more..</text>
<text x="1460.300" y="767" textLength="433.700" lengthAdjust="spacingAndGlyphs">30 Jun - 16 Oct, 2025 | Chaitanya Mella, Charles Stones &amp; 3 more..</text>
<text x="1551.700" y="968.300" textLength="183.300" lengthAdjust="spacingAndGlyphs">Set electric boxes checking</text>
<text x="1778" y="1072" textLength="237.700" lengthAdjust="spacingAndGlyphs">18 Aug - 23 Dec, 2025 | Victor Young</text>
<text x="1275" y="1194" textLength="226" lengthAdjust="spacingAndGlyphs">01 Jun - 31 Aug, 2025 | Unassigned</text>
<text x="1890.700" y="1212.700" textLength="158" lengthAdjust="spacingAndGlyphs">Finish coat exterior trim</text>
</g>
<path d="M951 1013V1027L943.500 1020z" fill="#aaa"/>
</g>

<!-- collapse handle -->
<path d="M930 675.700H914a8 8 0 0 0-8 8V712a8 8 0 0 0 8 8H930z" fill="#fff" stroke="#efeff2" stroke-width="1.200"/>
<path d="M921 691L915 698L921 705" fill="none" stroke="#222" stroke-width="2"/>

<!-- months / zoom controls -->
<rect x="1756" y="278.500" width="127" height="40.500" rx="2" fill="#fff" style="filter:drop-shadow(0 0 3px rgba(0,0,0,.16))"/>
<text x="1771.400" y="306" font-size="19.500" fill="#333" textLength="66.500" lengthAdjust="spacingAndGlyphs">Months</text>
<path d="M1859 296L1864.300 301L1869.600 296" class="bl"/>
<rect x="1892.500" y="278.500" width="98" height="40.500" rx="2" fill="#fff" style="filter:drop-shadow(0 0 3px rgba(0,0,0,.16))"/>
<path d="M1912 298H1924M1966 293V305M1960 299H1972" stroke="#5f97f6" stroke-width="1.800" fill="none"/>
<path d="M1941 286V312" stroke="#e4e4e8" stroke-width="1.200"/>

<!-- right strip -->
<rect x="2038" y="208" width="8" height="1027" fill="url(#sh)"/>
<rect x="2046" y="208" width="24" height="1027" fill="#fff"/>
<path d="M2046.500 208V1235" stroke="#ececf0" stroke-width="1"/>
<path d="M2070 232H2067.500V248H2070" fill="none" stroke="#666" stroke-width="1.300"/>
<circle cx="2069" cy="297" r="2" fill="#999"/>

<!-- BOTTOM BAR -->
<rect x="32" y="1229" width="2038" height="6" fill="url(#shb)"/>
<rect x="32" y="1235" width="2038" height="39" fill="#fff"/>
<rect x="32" y="1235" width="368" height="39" fill="#fafafa"/>
<path d="M32 1235.500H2070" stroke="#e4e4e6" stroke-width="1.200"/>
<path d="M400 1235V1274M1598.700 1235V1274M1884 1235V1274M1960 1235V1274M2035 1235V1274" stroke="#e8e8ea" stroke-width="1.200"/>
<g fill="#7e7e7e">
<circle cx="82" cy="1249" r="8"/><path d="M71 1253Q72 1245 76 1246Q72 1251 77 1257L83 1259Q75 1260 72 1258z"/>
<circle cx="204" cy="1245" r="2.800"/><circle cx="217" cy="1245" r="2.800"/><circle cx="210.500" cy="1243.500" r="3"/>
<path d="M199 1257Q199 1249 204 1249Q207 1249 207 1252Q203 1254 203 1257zM222 1257Q222 1249 217 1249Q214 1249 214 1252Q218 1254 218 1257z"/><path d="M204 1258.500Q204 1249 210.500 1249Q217 1249 217 1258.500z"/>
<circle cx="340" cy="1246" r="4.500"/><path d="M332 1258.500Q332 1251 340 1251Q348 1251 348 1258.500z"/>
</g>
<g font-size="12" fill="#7a7a7a">
<text x="65.600" y="1270" textLength="30.500" lengthAdjust="spacingAndGlyphs">Chats</text>
<text x="184.800" y="1270" textLength="50.200" lengthAdjust="spacingAndGlyphs">Channels</text>
<text x="315.600" y="1270" textLength="48.400" lengthAdjust="spacingAndGlyphs">Contacts</text>
</g>
<text x="415" y="1259.300" font-size="17" fill="#a0a0a0" textLength="292" lengthAdjust="spacingAndGlyphs">Here is your Smart Chat (Ctrl+Space)</text>
<rect x="1675" y="1236.700" width="133.500" height="38" fill="#2979f5"/>
<path d="M1692 1257V1255a7.500 8 0 0 1 15 0V1257Q1706.500 1263 1700 1264.500" fill="none" stroke="#fff" stroke-width="1.400"/>
<path d="M1690.500 1254V1259M1708.500 1254V1259" stroke="#fff" stroke-width="1.800"/>
<text x="1713" y="1263.300" font-size="19" fill="#fff" textLength="80" lengthAdjust="spacingAndGlyphs">Live Chat</text>
<g class="dk" style="stroke:#222;stroke-width:1.500">
<path d="M1625 1250H1634L1625.500 1264.500H1635L1640 1252"/>
<path d="M1637 1264.500L1643.500 1253L1649 1264.500zM1642 1250L1644.500 1247"/>
<path d="M1832 1265L1838 1259M1840 1248L1853 1261L1850 1263Q1845 1266 1840 1260L1838 1258Q1835 1254 1840 1248zM1846 1250L1851 1246M1852 1257L1857 1252"/>
<path d="M1911 1254L1924 1246L1928 1260L1914 1260ZM1916 1260V1265L1921 1266V1260M1930 1247L1933 1245M1932 1253H1936M1930 1258L1933 1260"/>
<circle cx="1997.500" cy="1255" r="11.500"/>
</g>
<path d="M1986 1255V1267H1998Q1988 1265 1986 1255z" fill="#111"/>
<text x="1997.500" y="1261.500" font-size="17" fill="#222" text-anchor="middle">?</text>
<circle cx="2072" cy="1255" r="10" fill="none" stroke="#222" stroke-width="1.500"/>
<circle cx="2072" cy="1255" r="4.500" fill="none" stroke="#222" stroke-width="1.500"/>
</g>
</svg>
</body></html>
